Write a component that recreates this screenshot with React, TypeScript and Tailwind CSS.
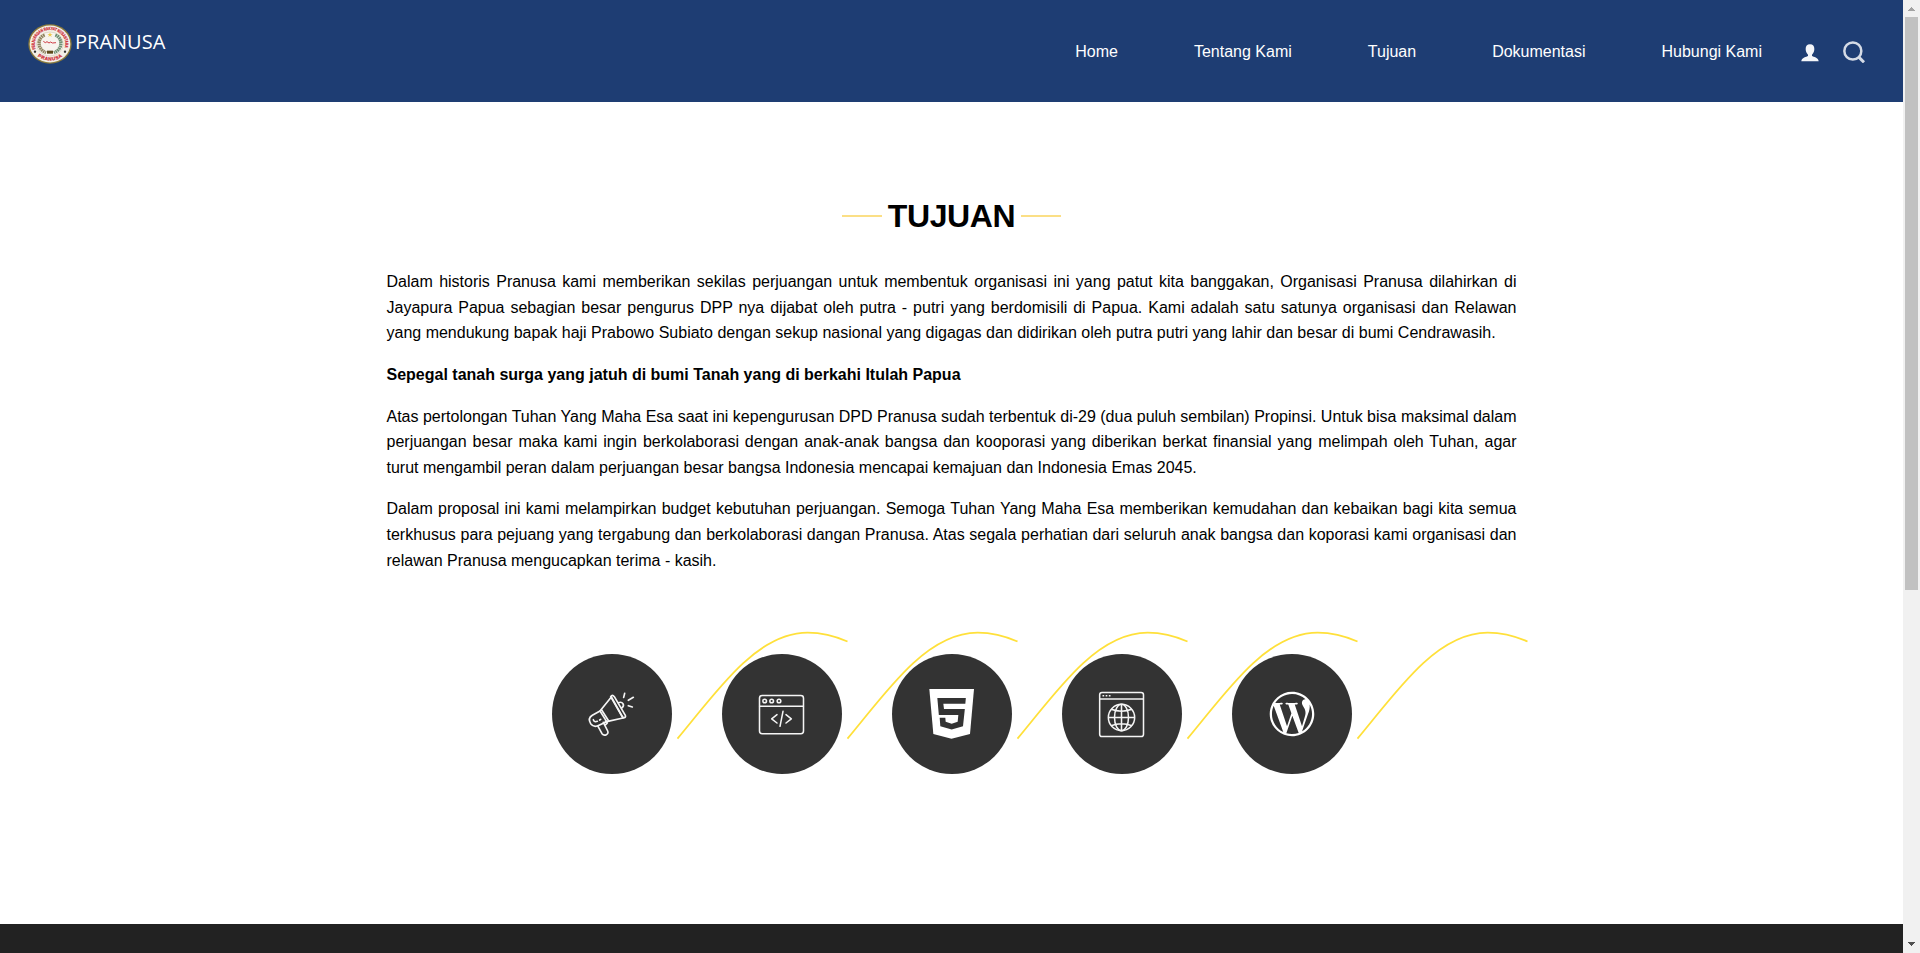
import type { ReactNode } from "react";
import { FaWordpressSimple } from "react-icons/fa";

function Emblem() {
  return (
    <svg viewBox="0 0 132 120" className="h-10 w-11 shrink-0 overflow-visible" preserveAspectRatio="none">
      <defs>
        <path id="ring-top" d="M24 77A46 42 0 1 1 108 77" />
        <path id="ring-bottom" d="M26 94A55 50 0 0 0 106 94" />
      </defs>
      <ellipse cx="66" cy="60" rx="65" ry="59" fill="#8a7a3c" />
      <ellipse cx="66" cy="60" rx="61" ry="55.500" fill="#f4efe6" />
      <text fontFamily="Liberation Sans, sans-serif" fontSize="13" fontWeight="700" fill="#cf2f3b" stroke="#cf2f3b" strokeWidth="0.800">
        <textPath href="#ring-top" startOffset="2" textLength="164" lengthAdjust="spacingAndGlyphs">
          PERJUANGAN RAKYAT NUSANTARA
        </textPath>
      </text>
      <text fontFamily="Liberation Sans, sans-serif" fontSize="14" fontWeight="700" fill="#cf2f3b" stroke="#cf2f3b" strokeWidth="0.800">
        <textPath href="#ring-bottom" startOffset="4" textLength="80">
          PRANUSA
        </textPath>
      </text>
      <circle cx="21" cy="83" r="3.500" fill="#333" />
      <circle cx="111" cy="83" r="3.500" fill="#333" />
      <ellipse cx="66" cy="60" rx="40" ry="36" fill="#f7f4ef" stroke="#c9c0a6" strokeWidth="1.500" />
      <path d="M50 33C28 42 26 74 54 86" fill="none" stroke="#8f835f" strokeWidth="10" strokeDasharray="5 1.500" />
      <path d="M82 33C104 42 106 74 78 86" fill="none" stroke="#6f8f72" strokeWidth="10" strokeDasharray="5 1.500" />
      <path d="M66 25l2 5h6l-5 3 2 6-5-4-5 4 2-6-5-3h6z" fill="#ecc94b" />
      <path d="M46 52l6 4 5-3 6 4 5-3 5 3 11-1" fill="none" stroke="#cf3b45" strokeWidth="3" />
      <rect x="57" y="80" width="18" height="9" fill="#5c4a1a" />
    </svg>
  );
}

const navItems = ["Home", "Tentang Kami", "Tujuan", "Dokumentasi", "Hubungi Kami"];

function Header() {
  return (
    <header className="flex h-[102px] justify-between bg-[#1e3d73] pl-7 text-white">
      <div className="flex h-10 gap-[3px] pt-6">
        <Emblem />
        <span className="font-['Open_Sans',sans-serif] text-xl leading-[36px]">PRANUSA</span>
      </div>
      <nav className="flex h-[102px] items-center gap-[76px] pr-[38px]">
        {navItems.map((label) => (
          <a key={label} className="pt-[2px] whitespace-nowrap">
            {label}
          </a>
        ))}
        <div className="-ml-[37px] flex items-center gap-[24px]">
          <svg viewBox="0 0 54 54" className="mt-1 h-[18px] w-[18px]" fill="#f4f6fa">
            <path d="M27 1C18 1 14 7 14 15c0 7 3 13 7 17v4C17 39 1 40 1 52h52c0-12-16-13-20-16v-4c4-4 7-10 7-17C40 7 36 1 27 1z" />
          </svg>
          <svg viewBox="0 0 66 66" className="mt-[2px] h-[22px] w-[22px]" fill="none" stroke="#d5dbe6">
            <circle cx="29.500" cy="30" r="25.500" strokeWidth="7.500" />
            <path d="M46 47l17 17" strokeWidth="9" />
          </svg>
        </div>
      </nav>
    </header>
  );
}

function Megaphone() {
  return (
    <svg viewBox="36 102 360 360" className="h-full w-full" fill="none" stroke="#f5f5f5" strokeWidth="5" strokeLinecap="round" strokeLinejoin="round">
      <path d="M212 230q5-8 11 0l33 56q3 8-8 7z" />
      <path d="M214 231L180 273L200 305L249 294" />
      <path d="M214 231L249 293" />
      <path d="M180 273L157 286C147 292 146 301 152 311C158 319 167 321 177 316L200 305" />
      <path d="M160 299q3 9 12 5M179 300l3-2" />
      <path d="M174 319l12 22c7 9 22 2 17-8l-13-26" />
      <path d="M196 304l6 5-5 5M185 270l21 33" />
      <path d="M235 248c13-5 21 8 10 16" />
      <path d="M251 232l3-12M265 241l15-9M265 257l12 4" />
    </svg>
  );
}

function CodeWindow() {
  return (
    <svg viewBox="546 102 360 360" className="h-full w-full" fill="none" stroke="#f5f5f5" strokeWidth="4.600" strokeLinecap="round" strokeLinejoin="round">
      <rect x="658.500" y="226.500" width="132" height="114.500" rx="8" />
      <path d="M659 258.500H790" />
      <circle cx="674" cy="243" r="5.500" />
      <circle cx="695" cy="243" r="5.500" />
      <circle cx="717" cy="243" r="5.500" />
      <path d="M711 284l-16 12.500 16 12.500M738 284l16 12.500-16 12.500M729 274l-9 45" />
    </svg>
  );
}

function Html5() {
  return (
    <svg viewBox="126 102 360 360" className="h-full w-full">
      <path d="M238 207H372L360 342L304.500 356.500L250 342Z" fill="#fff" />
      <path
        d="M262 234H347.500L346 251H280L282 267H344.500L339 319L305 328.500L271 319L269 293H286L287 305L305 311L323 305L325 285H266.500Z"
        fill="#333"
      />
    </svg>
  );
}

function GlobeWindow() {
  return (
    <svg viewBox="636 102 360 360" className="h-full w-full" fill="none" stroke="#f5f5f5" strokeWidth="4.600">
      <rect x="749" y="217.500" width="131.500" height="132" rx="7" />
      <path d="M749 237H881" />
      <path d="M757.500 227h5M767 227h5M776.500 227h5" />
      <circle cx="814.500" cy="292.500" r="39.500" />
      <ellipse cx="814.500" cy="292.500" rx="21" ry="39.500" />
      <path d="M814.500 253V332M775 292.500H854M783 268Q814.500 279 846 268M783 317Q814.500 306 846 317" />
    </svg>
  );
}

function WordPress() {
  return (
    <div className="flex h-full w-[119px] items-center justify-center">
      <FaWordpressSimple className="h-[46px] w-[46px] text-white" />
    </div>
  );
}

const steps: { id: string; icon: ReactNode }[] = [
  { id: "campaign", icon: <Megaphone /> },
  { id: "code", icon: <CodeWindow /> },
  { id: "html", icon: <Html5 /> },
  { id: "web", icon: <GlobeWindow /> },
  { id: "wordpress", icon: <WordPress /> },
];

function Step({ icon }: { icon: ReactNode }) {
  return (
    <li className="relative w-[170px]">
      <div className="h-[120px] w-[120px] rounded-full bg-[#333]">{icon}</div>
      <svg viewBox="0 0 172 112" className="absolute -top-[24px] left-[125px] z-10 h-[112px] w-[172px]" fill="none" stroke="#ffe03a" strokeWidth="1.800">
        <path d="M.5 108.600C22 83 42 55.500 66 33.300C87.500 13.500 108 2.600 130.700 2.600C146 2.600 158 6 170.500 11.500" />
      </svg>
    </li>
  );
}

function Scrollbar() {
  return (
    <div className="flex w-[17px] shrink-0 flex-col items-center bg-[#f1f1f1]">
      <div className="flex h-[17px] shrink-0 items-center justify-center">
        <svg viewBox="0 0 7 4" className="mt-[1px] h-1 w-[7px]" fill="#a3a3a3" shapeRendering="crispEdges">
          <path d="M3 0h1v1h1v1h1v1h1v1H0V3h1V2h1V1h1z" />
        </svg>
      </div>
      <div className="h-[573px] w-[13px] bg-[#c1c1c1]" />
      <svg viewBox="0 0 7 4" className="mt-auto mb-[7px] h-1 w-[7px]" fill="#505050" shapeRendering="crispEdges">
        <path d="M0 0h7v1H6v1H5v1H4v1H3V3H2V2H1V1H0z" />
      </svg>
    </div>
  );
}

export default function App() {
  return (
    <div className="flex h-[953px] w-full overflow-hidden bg-white font-['Liberation_Sans',Arial,sans-serif] text-base text-black">
      <div className="flex min-w-0 flex-1 flex-col">
        <Header />
        <main className="flex h-[822px] shrink-0 flex-col items-center">
          <div className="mt-[94px] flex h-10 items-center">
            <span className="h-[2px] w-10 bg-[#fbdf86]" />
            <h2 className="w-[139px] text-center text-[32px] leading-10 font-bold tracking-[-0.4px]">TUJUAN</h2>
            <span className="h-[2px] w-10 bg-[#fbdf86]" />
          </div>
          <div className="mt-[33.2px] flex w-[1130px] flex-col gap-4 text-justify leading-[25.6px]">
            <p>
              Dalam historis Pranusa kami memberikan sekilas perjuangan untuk membentuk organisasi ini yang patut kita
              banggakan, Organisasi Pranusa dilahirkan di Jayapura Papua sebagian besar pengurus DPP nya dijabat oleh
              putra - putri yang berdomisili di Papua. Kami adalah satu satunya organisasi dan Relawan yang mendukung
              bapak haji Prabowo Subiato dengan sekup nasional yang digagas dan didirikan oleh putra putri yang lahir
              dan besar di bumi Cendrawasih.
            </p>
            <p className="font-bold">Sepegal tanah surga yang jatuh di bumi Tanah yang di berkahi Itulah Papua</p>
            <p>
              Atas pertolongan Tuhan Yang Maha Esa saat ini kepengurusan DPD Pranusa sudah terbentuk di-29 (dua puluh
              sembilan) Propinsi. Untuk bisa maksimal dalam perjuangan besar maka kami ingin berkolaborasi dengan
              anak-anak bangsa dan kooporasi yang diberikan berkat finansial yang melimpah oleh Tuhan, agar turut
              mengambil peran dalam perjuangan besar bangsa Indonesia mencapai kemajuan dan Indonesia Emas 2045.
            </p>
            <p>
              Dalam proposal ini kami melampirkan budget kebutuhan perjuangan. Semoga Tuhan Yang Maha Esa memberikan
              kemudahan dan kebaikan bagi kita semua terkhusus para pejuang yang tergabung dan berkolaborasi dangan
              Pranusa. Atas segala perhatian dari seluruh anak bangsa dan koporasi kami organisasi dan relawan Pranusa
              mengucapkan terima - kasih.
            </p>
          </div>
          <ul className="mt-[80.8px] ml-[51px] flex">
            {steps.map((step) => (
              <Step key={step.id} icon={step.icon} />
            ))}
          </ul>
        </main>
        <footer className="flex-1 bg-[#222]" />
      </div>
      <Scrollbar />
    </div>
  );
}
